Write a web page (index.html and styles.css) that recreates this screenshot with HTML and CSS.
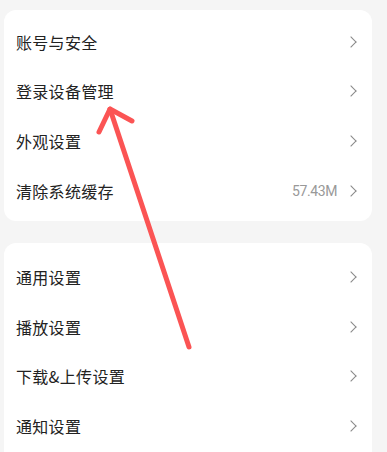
FILE: index.html
```html
<!DOCTYPE html>
<html lang="zh-CN">
<head>
  <meta charset="UTF-8" />
  <meta name="viewport" content="width=device-width, initial-scale=1.0"/>
  <title>设置</title>
  <link rel="stylesheet" href="styles.css">
</head>
<body>
  <div class="page">
    <div class="card first">
      <div class="row"><span class="label">账号与安全</span><span class="chev"></span></div>
      <div class="row"><span class="label">登录设备管理</span><span class="chev"></span></div>
      <div class="row"><span class="label">外观设置</span><span class="chev"></span></div>
      <div class="row"><span class="label">清除系统缓存</span><span class="value">57.43M</span><span class="chev"></span></div>
    </div>

    <div class="card second">
      <div class="row"><span class="label">通用设置</span><span class="chev"></span></div>
      <div class="row"><span class="label">播放设置</span><span class="chev"></span></div>
      <div class="row"><span class="label">下载&amp;上传设置</span><span class="chev"></span></div>
      <div class="row"><span class="label">通知设置</span><span class="chev"></span></div>
    </div>
  </div>

  <!-- annotation arrow drawn over the screenshot -->
  <svg class="arrow" width="387" height="452" viewBox="0 0 387 452">
    <g stroke="#fb5454" stroke-width="5" stroke-linecap="round" stroke-linejoin="round" fill="none">
      <line x1="189" y1="347" x2="110" y2="109"/>
      <polyline points="99,132 110,109 132,121"/>
    </g>
  </svg>
</body>
</html>
```

FILE: styles.css
```css
body {
  margin: 0;
  background: #f5f5f5;
  font-family: "Noto Sans CJK SC", "Noto Sans", sans-serif;
  color: #222;
  position: relative;
  overflow: hidden;
  height: 452px;
}

.page {
  padding: 10px 15px 0 4px;
}

.card {
  background: #fff;
  border-radius: 12px;
}

.card.first {
  padding: 7px 0 6px;
}

.card.second {
  margin-top: 22px;
  padding: 9px 0 20px;
}

.row {
  display: flex;
  align-items: center;
  height: 49.6px;
  padding: 0 17px 0 12px;
}

.label {
  flex: 1;
  font-size: 16px;
  letter-spacing: 0.3px;
}

.value {
  font-family: "Roboto", "Liberation Sans", sans-serif;
  font-size: 14px;
  color: #999;
  margin-right: 10px;
  letter-spacing: -0.4px;
}

.chev {
  width: 7px;
  height: 7px;
  border-top: 1.5px solid #888;
  border-right: 1.5px solid #888;
  transform: rotate(45deg);
}

.arrow {
  position: absolute;
  left: 0;
  top: 0;
}
```
